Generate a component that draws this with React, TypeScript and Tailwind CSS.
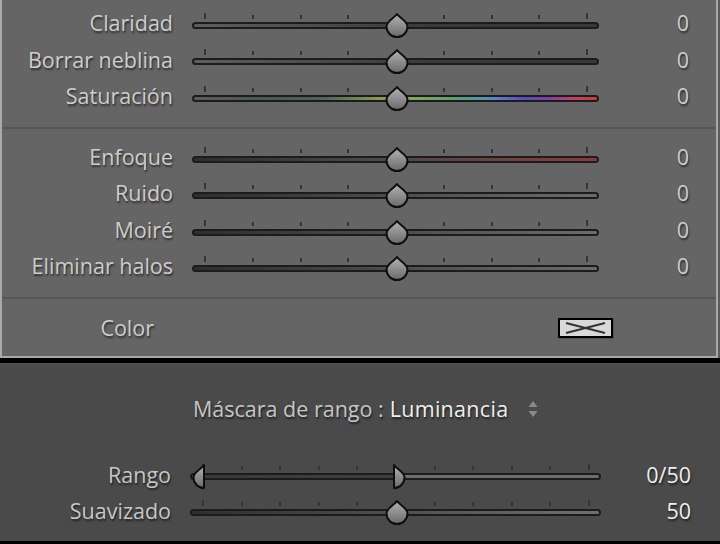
import React from "react";

const FONT = "font-['Open_Sans',sans-serif]";
const SHADOW = "[text-shadow:1px_2px_2px_rgba(0,0,0,0.55)]";

function Thumb({ kind = "full" }: { kind?: "full" | "left" | "right" }) {
  const id = React.useId().replace(/:/g, "");
  let d = "M12 1 C14 4.5 22.5 8 22.5 13.5 A10.5 10.5 0 0 1 1.5 13.5 C1.5 8 10 4.5 12 1 Z";
  let w = 24;
  let vb = "0 0 24 25";
  if (kind === "left") {
    d = "M12 1 L12 24 A10.5 10.5 0 0 1 1.5 13.5 C1.5 8 10 4.5 12 1 Z";
    w = 13;
    vb = "0 0 13 25";
  } else if (kind === "right") {
    d = "M1 1 L1 24 A10.5 10.5 0 0 0 11.5 13.5 C11.5 8 3 4.5 1 1 Z";
    w = 13;
    vb = "0 0 13 25";
  }
  return (
    <svg width={w} height={25} viewBox={vb} className="block">
      <defs>
        <linearGradient id={id} x1="0" y1="0" x2="0" y2="1">
          <stop offset="0%" stopColor="#b2b2b2" />
          <stop offset="100%" stopColor="#6a6a6a" />
        </linearGradient>
      </defs>
      <path d={d} fill={`url(#${id})`} stroke="#0e0e0e" strokeWidth={2} strokeLinejoin="round" />
    </svg>
  );
}

function Ticks({ count }: { count: number }) {
  return (
    <div className="flex h-[6px] items-end justify-between pl-[12px] pr-[11px]">
      {Array.from({ length: count }).map((_, i) => (
        <div
          key={i}
          className={`w-[2px] bg-[#353535] ${i === 0 || i === count - 1 ? "h-[6px]" : "h-[4px]"}`}
        />
      ))}
    </div>
  );
}

function TopSlider({ track }: { track: string }) {
  return (
    <div className="relative w-[407px] pb-[5px]">
      <Ticks count={9} />
      <div className={`mt-[3px] h-[7px] rounded-full border-2 border-[#1c1c1c] ${track}`} />
      <div className="absolute left-[calc(50%-11px)] top-[0px]">
        <Thumb />
      </div>
    </div>
  );
}

const LABEL = `text-right text-[21.5px] leading-none ${SHADOW}`;

function TopRow({ label, track }: { label: string; track: string }) {
  return (
    <div className="flex h-[36.5px] items-center">
      <div className={`-mt-[1px] w-[171px] text-[#cdcdcd] ${LABEL}`}>{label}</div>
      <div className="ml-[19px]">
        <TopSlider track={track} />
      </div>
      <div className={`-mt-[1px] w-[90px] text-[#cdcdcd] ${LABEL}`}>0</div>
    </div>
  );
}

export default function App() {
  const group1 = [
    { label: "Claridad", track: "bg-[linear-gradient(to_right,#5e5e5e,#3a3a3a_60%,#383838)]" },
    { label: "Borrar neblina", track: "bg-[linear-gradient(to_right,#5e5e5e,#3a3a3a_60%,#383838)]" },
    {
      label: "Saturación",
      track:
        "bg-[linear-gradient(to_right,#5c5c5c_0%,#4e5858_18%,#52625c_32%,#8a9a52_46%,#86a858_54%,#62a070_64%,#4e9aa0_70%,#5a88c8_74%,#5a4cc0_82%,#8040a8_88%,#c04068_94%,#d23a3a_100%)]",
    },
  ];
  const group2 = [
    { label: "Enfoque", track: "bg-[linear-gradient(to_right,#2e2e2e,#4a4a4a_45%,#8c3a3a)]" },
    { label: "Ruido", track: "bg-[linear-gradient(to_right,#2e2e2e,#6c6c6c)]" },
    { label: "Moiré", track: "bg-[linear-gradient(to_right,#2e2e2e,#6c6c6c)]" },
    { label: "Eliminar halos", track: "bg-[linear-gradient(to_right,#2e2e2e,#6c6c6c)]" },
  ];

  return (
    <div className={`flex h-[544px] w-[720px] flex-col bg-black ${FONT}`}>
      <div className="bg-[#5c5c5c]">
        <div className="flex h-[358px] w-[718px] flex-col border-x-2 border-b-2 border-[#a9a9a9] bg-[#656565] pt-[5px]">
          {group1.map((r) => (
            <TopRow key={r.label} label={r.label} track={r.track} />
          ))}
          <div className="mt-[12.5px] h-[2px] bg-[#575757]" />
          <div className="mt-[9.75px]">
            {group2.map((r) => (
              <TopRow key={r.label} label={r.label} track={r.track} />
            ))}
          </div>
          <div className="mt-[12.25px] h-[2px] bg-[#575757]" />
          <div className="flex flex-1 items-center">
            <div className={`w-[152px] text-[#cdcdcd] ${LABEL}`}>Color</div>
            <div className="ml-auto mr-[103px] flex h-[20px] w-[55px] items-center justify-center border-2 border-black bg-[#d9d9d9] shadow-[1px_1px_0_#555]">
              <svg width="51" height="16" viewBox="0 0 51 16">
                <line x1="6" y1="3" x2="45" y2="13" stroke="#333" strokeWidth="2.2" />
                <line x1="6" y1="13" x2="45" y2="3" stroke="#333" strokeWidth="2.2" />
              </svg>
            </div>
          </div>
        </div>
      </div>

      <div className="mt-[5px] h-[178px] border-t border-[#565656] bg-[#4a4a4a] pt-[27px]">
        <div className="flex h-[36px] items-center pl-[193px]">
          <span className={`text-[#c6c6c6] ${LABEL}`}>Máscara de rango :</span>
          <span className={`ml-[6px] tracking-[0.3px] text-[#eeeeee] ${LABEL}`}>Luminancia</span>
          <svg width="10" height="18" viewBox="0 0 10 18" className="ml-[20px]">
            <path d="M5 1 L9.5 7 L0.5 7 Z" fill="#8a8a8a" />
            <path d="M5 17 L9.5 11 L0.5 11 Z" fill="#8a8a8a" />
          </svg>
        </div>

        <div className="mt-[30px] flex h-[36px] items-center">
          <div className={`w-[171px] text-[#c6c6c6] ${LABEL}`}>Rango</div>
          <div className="relative ml-[19px] w-[411px] pb-[6px]">
            <Ticks count={11} />
            <div className="mt-[3px] h-[7px] rounded-full border-2 border-[#1c1c1c] bg-[linear-gradient(to_right,#3a3a3a_0%,#3e3e3e_50%,#6e6e6e_50%,#6e6e6e_100%)]" />
            <div className="absolute left-[2px] top-[0px]">
              <Thumb kind="left" />
            </div>
            <div className="absolute left-[203px] top-[0px]">
              <Thumb kind="right" />
            </div>
          </div>
          <div className={`w-[90px] text-[#eeeeee] ${LABEL}`}>0/50</div>
        </div>

        <div className="flex h-[36px] items-center">
          <div className={`w-[171px] text-[#c6c6c6] ${LABEL}`}>Suavizado</div>
          <div className="relative ml-[19px] w-[411px] pb-[6px]">
            <Ticks count={11} />
            <div className="mt-[3px] h-[7px] rounded-full border-2 border-[#1c1c1c] bg-[linear-gradient(to_right,#2e2e2e,#707070)]" />
            <div className="absolute left-[calc(50%-10.5px)] top-[0px]">
              <Thumb />
            </div>
          </div>
          <div className={`w-[90px] text-[#eeeeee] ${LABEL}`}>50</div>
        </div>
      </div>
    </div>
  );
}
